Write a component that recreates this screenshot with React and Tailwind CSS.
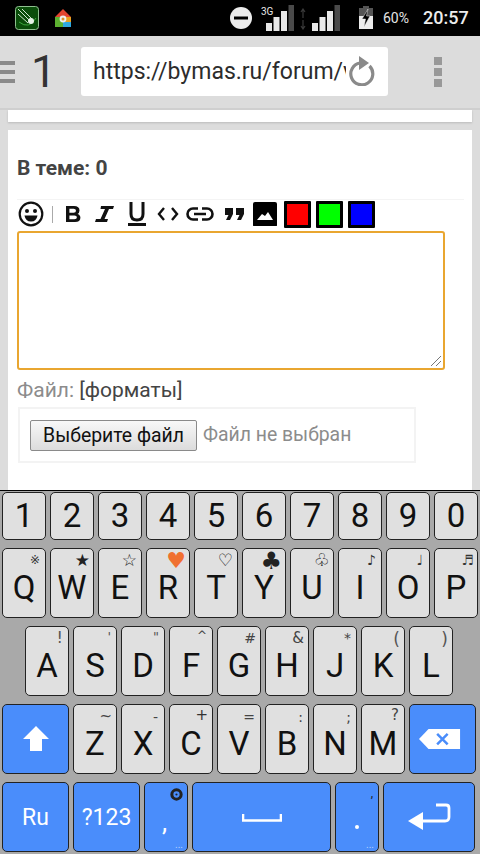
const F = { fontFamily: 'Roboto, "Noto Sans", sans-serif' };
const D = { fontFamily: '"DejaVu Sans", sans-serif' };

function Bars() {
  return (
    <svg width="28" height="26" viewBox="0 0 28 26" className="block">
      <rect x="0" y="18" width="6" height="8" fill="#e8e8e8" />
      <rect x="7.5" y="12" width="6" height="14" fill="#e8e8e8" />
      <rect x="15" y="6" width="6" height="20" fill="#e8e8e8" />
      <rect x="22.5" y="0" width="5.5" height="26" fill="#4a4a4a" />
    </svg>
  );
}

function StatusBar() {
  return (
    <div className="relative h-[36px] bg-black shrink-0">
      <svg width="24" height="24" viewBox="0 0 24 24" className="absolute left-[15px] top-[6px]">
        <rect x="0.5" y="0.5" width="23" height="23" rx="3" fill="#0a4d0a" stroke="#8fbf8f" />
        <path d="M3 3 L16 16 M7 3 L17 13 M3 8 L13 17" stroke="#cfe8cf" strokeWidth="1" />
        <path d="M4 16 Q14 24 21 12" stroke="#3fa83f" strokeWidth="1" fill="none" />
        <circle cx="16" cy="15" r="3" fill="#e6f2e6" />
      </svg>
      <svg width="16" height="18" viewBox="0 0 16 18" className="absolute left-[55px] top-[9px]">
        <path d="M8 0 L16 8 H0 Z" fill="#e2442f" />
        <rect x="0" y="8" width="8" height="10" fill="#5cb030" />
        <rect x="8" y="8" width="8" height="5" fill="#e8a020" />
        <rect x="8" y="13" width="8" height="5" fill="#2fa8e0" />
        <circle cx="8" cy="10" r="3.4" fill="#eee" />
        <circle cx="8" cy="10" r="1.5" fill="#e0902a" />
      </svg>
      <svg width="22" height="22" viewBox="0 0 22 22" className="absolute left-[230px] top-[7px]">
        <circle cx="11" cy="11" r="11" fill="#ececec" />
        <rect x="4" y="9.5" width="14" height="3" fill="#000" />
      </svg>
      <span className="absolute left-[261px] top-[6px] text-[10px] leading-[12px] text-[#e8e8e8]" style={F}>3G</span>
      <div className="absolute left-[266px] top-[5px]"><Bars /></div>
      <svg width="6" height="22" viewBox="0 0 6 22" className="absolute left-[300px] top-[8px]">
        <path d="M3 1 V10 M1 4 L3 1 L5 4 M3 12 V21 M1 18 L3 21 L5 18" stroke="#3a3a3a" strokeWidth="1.2" fill="none" />
      </svg>
      <div className="absolute left-[312px] top-[5px]"><Bars /></div>
      <svg width="14" height="24" viewBox="0 0 14 24" className="absolute left-[359px] top-[6px]">
        <rect x="4" y="0" width="6" height="3" fill="#555" />
        <rect x="0" y="2" width="14" height="10" fill="#555" />
        <rect x="0" y="10" width="14" height="13" fill="#ececec" />
        <path d="M9 3 L3 13 H6.5 L5 21 L11 10 H7.5 Z" fill="#000" stroke="#ececec" strokeWidth="0.5" />
      </svg>
      <span className="absolute left-[383px] top-[9px] text-[14px] leading-[18px] text-[#e4e4e4]" style={F}>60%</span>
      <span className="absolute left-[423px] top-[6px] text-[18px] leading-[24px] font-medium text-[#ececec]" style={F}>20:57</span>
    </div>
  );
}

function Toolbar() {
  return (
    <div className="flex items-center h-[72px] bg-[#dcdcdc] border-b-[2px] border-[#cfcfcf] shrink-0 box-content">
      <div className="flex flex-col gap-[5px] w-[15px] shrink-0">
        <div className="h-[4px] bg-[#8a8a8a]" />
        <div className="h-[4px] bg-[#8a8a8a]" />
        <div className="h-[4px] bg-[#8a8a8a]" />
      </div>
      <div className="w-[66px] pl-[16px] shrink-0 text-[45px] leading-[48px] text-[#333]" style={F}>1</div>
      <div className="relative w-[307px] h-[49px] bg-white rounded-[3px] pl-[12px] flex items-center overflow-hidden shrink-0 mt-[-1px]">
        <span className="text-[23px] leading-[28px] text-[#2c2c2c] whitespace-nowrap w-[253px] overflow-hidden block" style={F}>https://bymas.ru/forum/v</span>
        <svg width="28" height="30" viewBox="0 0 28 30" className="absolute left-[267px] top-[9px]">
          <path d="M21.5 10 A11 11 0 1 1 12 7" fill="none" stroke="#8a8a8a" strokeWidth="3.2" />
          <path d="M11 0 L21 7 L11 14 Z" fill="#8a8a8a" />
        </svg>
      </div>
      <div className="ml-[46px] flex flex-col gap-[3px] shrink-0 mt-[-1px]">
        <div className="w-[8px] h-[8px] bg-[#999]" />
        <div className="w-[8px] h-[8px] bg-[#999]" />
        <div className="w-[8px] h-[8px] bg-[#999]" />
      </div>
    </div>
  );
}

function Swatch({ c }) {
  return <div className="w-[27px] h-[27px] border-[3px] border-black rounded-[1px] shrink-0" style={{ background: c }} />;
}

function EditorIcons() {
  return (
    <div className="h-[31px] border-t border-[#f4f4f4] ml-[9px] mr-[8px] pb-[2px] relative flex items-center">
      <svg width="26" height="26" viewBox="0 0 26 26" className="ml-[1px] shrink-0">
        <circle cx="13" cy="13" r="11.3" fill="none" stroke="#111" strokeWidth="2.2" />
        <circle cx="9" cy="10" r="2" fill="#111" />
        <circle cx="17" cy="10" r="2" fill="#111" />
        <path d="M6.5 14.5 H19.5 Q18.5 20.5 13 20.5 Q7.5 20.5 6.5 14.5 Z" fill="#111" />
      </svg>
      <div className="w-[1px] h-[17px] bg-[#aaa] ml-[8px] shrink-0" />
      <svg width="18" height="20" viewBox="0 0 18 20" className="ml-[11px] shrink-0">
        <path fillRule="evenodd" d="M2 2 H10 Q15.5 2 15.5 6.6 Q15.5 9 13.6 9.9 Q16.4 10.9 16.4 13.8 Q16.4 18 11 18 H2 Z M5.4 4.8 V8.8 H9.6 Q12 8.8 12 6.8 Q12 4.8 9.6 4.8 Z M5.4 11.4 V15.2 H10.4 Q12.9 15.2 12.9 13.3 Q12.9 11.4 10.4 11.4 Z" fill="#111" />
      </svg>
      <svg width="19" height="20" viewBox="0 0 19 20" className="ml-[13px] shrink-0">
        <path d="M6 2 H19 L18 5 H14 L9.5 15 H13 L12 18 H0 L1 15 H5.5 L10 5 H5.5 Z" fill="#111" />
      </svg>
      <svg width="18" height="26" viewBox="0 0 18 26" className="ml-[14px] shrink-0">
        <path d="M3 1 V13 Q3 19 9 19 Q15 19 15 13 V1" fill="none" stroke="#111" strokeWidth="3" />
        <rect x="0" y="22" width="18" height="3" fill="#111" />
      </svg>
      <svg width="22" height="14" viewBox="0 0 22 14" className="ml-[11px] shrink-0">
        <path d="M7 1 L2 7 L7 13 M15 1 L20 7 L15 13" fill="none" stroke="#111" strokeWidth="2.4" />
      </svg>
      <svg width="28" height="14" viewBox="0 0 28 14" className="ml-[7px] shrink-0">
        <path d="M12 1.5 H7 A5.5 5.5 0 0 0 7 12.5 H12 M16 1.5 H21 A5.5 5.5 0 0 1 21 12.5 H16 M8 7 H20" fill="none" stroke="#111" strokeWidth="2.6" />
      </svg>
      <svg width="20" height="14" viewBox="0 0 20 14" className="ml-[11px] shrink-0">
        <path d="M0 1 H8 V7 L5 13 H1 L3.5 8 H0 Z M11 1 H19 V7 L16 13 H12 L14.5 8 H11 Z" fill="#111" />
      </svg>
      <svg width="24" height="24" viewBox="0 0 24 24" className="ml-[8px] shrink-0">
        <rect x="0" y="0" width="24" height="25" rx="2" fill="#000" />
        <path d="M4 18 L9 12 L12 14 L15 10 L20 18 Z" fill="#fff" />
      </svg>
      <div className="flex gap-[5px] ml-[7px]">
        <Swatch c="#ff0000" />
        <Swatch c="#00ff00" />
        <Swatch c="#0000ff" />
      </div>
    </div>
  );
}

function Page() {
  return (
    <div className="flex-1 min-h-0 bg-[#dcdcdc] px-[8px] overflow-hidden flex flex-col" style={F}>
      <div className="h-[12px] bg-white shadow-[0_1px_2px_#bbb] shrink-0" />
      <div className="mt-[8px] flex-1 bg-white">
        <div className="pt-[26px] pl-[9px] h-[69px] text-[21px] leading-[24px] font-bold text-[#444]">В теме: 0</div>
        <EditorIcons />
        <div className="relative ml-[9px] mt-[1px] w-[428px] h-[139px] border-[2px] border-[#e9a630] rounded-[3px] bg-white">
          <svg width="12" height="12" viewBox="0 0 12 12" className="absolute right-[1px] bottom-[1px]">
            <path d="M1 11 L11 1 M6 11 L11 6" stroke="#777" strokeWidth="1" />
          </svg>
        </div>
        <div className="pl-[9px] mt-[8px] text-[21px] leading-[24px] text-[#8c8c8c]">Файл: <span className="text-[#444]">[форматы]</span></div>
        <div className="ml-[10px] mt-[5px] w-[398px] h-[56px] border-[2px] border-[#f3f3f3] pl-[10px] pt-[11px] flex items-start">
          <div className="w-[167px] h-[31px] border border-[#8a8a8a] rounded-[2px] bg-gradient-to-b from-[#f8f8f8] to-[#dcdcdc] text-[19.4px] leading-[29px] text-[#111] text-center shrink-0 whitespace-nowrap">Выберите файл</div>
          <span className="ml-[6px] text-[19.4px] leading-[30px] text-[#8c8c8c] whitespace-nowrap">Файл не выбран</span>
        </div>
      </div>
    </div>
  );
}

function Key({ label, hint, hintClass = "", big = false }) {
  return (
    <div className={`relative ${big ? "h-[48px]" : "h-[70px]"} w-[44px] shrink-0 bg-[#e0e0e0] border border-[#222] rounded-[5px] flex justify-center text-[#111] ${big ? "items-center" : "items-end pb-[16px]"}`} style={F}>
      <span className="text-[33px] leading-[26px]">{label}</span>
      {hint && <span className={`absolute leading-none ${hintClass}`} style={D}>{hint}</span>}
    </div>
  );
}

function Action({ w, children }) {
  return (
    <div className="relative h-[70px] shrink-0 bg-[#4a8dfb] border border-[#222] rounded-[5px] flex items-center justify-center text-white" style={{ width: w, ...F }}>
      {children}
    </div>
  );
}

const row2 = [
  ["Q", "※", "right-[5px] top-[5px] text-[12px] text-[#333]"],
  ["W", "★", "right-[3px] top-[3px] text-[17px] text-[#222]"],
  ["E", "☆", "right-[4px] top-[3px] text-[17px] text-[#222]"],
  ["R", "♥", "right-[3px] top-[1px] text-[22px] text-[#f07030]"],
  ["T", "♡", "right-[4px] top-[3px] text-[17px] text-[#111]"],
  ["Y", "♣", "right-[3px] top-[0px] text-[24px] text-[#222]"],
  ["U", "♧", "right-[3px] top-[2px] text-[18px] text-[#111]"],
  ["I", "♪", "right-[5px] top-[4px] text-[14px] text-[#333]"],
  ["O", "♩", "right-[6px] top-[4px] text-[14px] text-[#333]"],
  ["P", "♬", "right-[3px] top-[4px] text-[14px] text-[#333]"],
];
const row3 = [
  ["A", "!", "right-[5px] top-[3px] text-[16px] text-[#555]"],
  ["S", "'", "right-[5px] top-[3px] text-[13px] text-[#555]"],
  ["D", '"', "right-[5px] top-[3px] text-[13px] text-[#555]"],
  ["F", "^", "right-[5px] top-[3px] text-[12px] text-[#444]"],
  ["G", "#", "right-[4px] top-[4px] text-[14px] text-[#444]"],
  ["H", "&", "right-[4px] top-[4px] text-[15px] text-[#444]"],
  ["J", "*", "right-[5px] top-[4px] text-[14px] text-[#444]"],
  ["K", "(", "right-[4px] top-[4px] text-[17px] text-[#555]"],
  ["L", ")", "right-[4px] top-[4px] text-[17px] text-[#555]"],
];
const row4 = [
  ["Z", "~", "right-[4px] top-[4px] text-[15px] text-[#444]"],
  ["X", "-", "right-[6px] top-[5px] text-[14px] text-[#444]"],
  ["C", "+", "right-[4px] top-[3px] text-[15px] text-[#333]"],
  ["V", "=", "right-[5px] top-[5px] text-[14px] text-[#444]"],
  ["B", ":", "right-[5px] top-[5px] text-[14px] text-[#444]"],
  ["N", ";", "right-[5px] top-[5px] text-[14px] text-[#444]"],
  ["M", "?", "right-[5px] top-[3px] text-[15px] text-[#444]"],
];

function Keyboard() {
  return (
    <div className="h-[364px] shrink-0 bg-[#a9a9a9] border-t border-black pt-[1px] pl-[2px] flex flex-col">
      <div className="flex gap-[4px]">
        {"1234567890".split("").map((k) => <Key key={k} label={k} big />)}
      </div>
      <div className="flex gap-[4px] mt-[8px]">
        {row2.map(([l, h, c]) => <Key key={l} label={l} hint={h} hintClass={c} />)}
      </div>
      <div className="flex gap-[4px] mt-[8px] pl-[23px]">
        {row3.map(([l, h, c]) => <Key key={l} label={l} hint={h} hintClass={c} />)}
      </div>
      <div className="flex gap-[4px] mt-[8px]">
        <Action w={67}>
          <svg width="28" height="26" viewBox="0 0 28 26"><path d="M14 0 L27 13 H20 V25 H8 V13 H1 Z" fill="#fff" /></svg>
        </Action>
        {row4.map(([l, h, c]) => <Key key={l} label={l} hint={h} hintClass={c} />)}
        <Action w={67}>
          <svg width="42" height="21" viewBox="0 0 44 22" className="mr-[5px]">
            <path d="M10 0 H43 V21 H10 L0 10.5 Z" fill="#fff" />
            <path d="M19 5 L30 16 M30 5 L19 16" stroke="#4a8dfb" strokeWidth="2.6" />
          </svg>
        </Action>
      </div>
      <div className="flex gap-[4px] mt-[8px]">
        <Action w={67}><span className="text-[23px] mt-[3px]">Ru</span></Action>
        <Action w={67}><span className="text-[23px] mt-[3px]">?123</span></Action>
        <Action w={44}>
          <span className="absolute left-[17px] top-[24px] text-[26px] leading-[30px]">,</span>
          <svg width="13" height="13" viewBox="0 0 12 12" className="absolute right-[4px] top-[5px]">
            <circle cx="6" cy="6" r="4.3" fill="none" stroke="#222" strokeWidth="2.8" />
            <circle cx="6" cy="6" r="1" fill="#222" />
          </svg>
          <span className="absolute right-[4px] bottom-[1px] text-[10px] leading-[10px] text-[#b8d2fc]">...</span>
        </Action>
        <Action w={139}>
          <svg width="40" height="8" viewBox="0 0 40 8" className="mt-[1px]"><path d="M1 0 V6.5 H39 V0" fill="none" stroke="#fff" strokeWidth="2.6" /></svg>
        </Action>
        <Action w={44}>
          <span className="absolute left-[19px] top-[42px] w-[4px] h-[4px] rounded-full bg-white" />
          <span className="absolute right-[5px] top-[3px] text-[12px] leading-[14px] text-[#222]">,</span>
          <span className="absolute right-[4px] bottom-[1px] text-[10px] leading-[10px] text-[#b8d2fc]">...</span>
        </Action>
        <Action w={92}>
          <svg width="44" height="28" viewBox="0 0 44 28">
            <path d="M29 2 H39 Q42 2 42 5 V14 Q42 18 38 18 H14" fill="none" stroke="#fff" strokeWidth="2.8" />
            <path d="M16 9 L1 18 L16 27 Z" fill="#fff" />
          </svg>
        </Action>
      </div>
    </div>
  );
}

export default function App() {
  return (
    <div className="w-[480px] h-[854px] flex flex-col overflow-hidden">
      <StatusBar />
      <Toolbar />
      <Page />
      <Keyboard />
    </div>
  );
}
